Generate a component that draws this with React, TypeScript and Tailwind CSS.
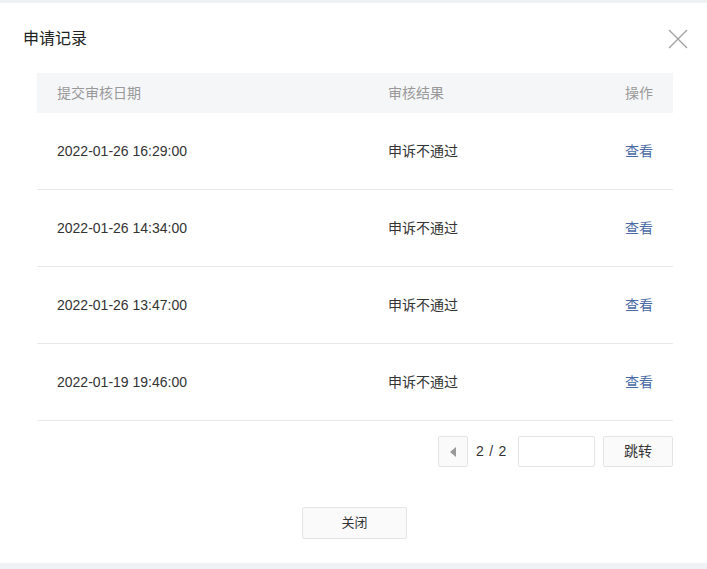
const rows = [
  { date: "2022-01-26 16:29:00", result: "申诉不通过" },
  { date: "2022-01-26 14:34:00", result: "申诉不通过" },
  { date: "2022-01-26 13:47:00", result: "申诉不通过" },
  { date: "2022-01-19 19:46:00", result: "申诉不通过" },
];

export default function App() {
  return (
    <div
      className="h-[569px] w-[707px] bg-[#f0f1f4] pt-[3px] pb-[6px] text-[14px] text-[#333]"
      style={{ fontFamily: '"Liberation Sans", "Noto Sans CJK SC", sans-serif' }}
    >
      <div className="flex h-full flex-col bg-white">
        <div className="flex items-center justify-between pl-[23px] pr-[18px] pt-[25px]">
          <h2 className="text-[16px] leading-[22px] text-[#222]">申请记录</h2>
          <svg width="20" height="20" viewBox="0 0 20 20" className="mr-[1px]">
            <path d="M1 1 L19 19 M19 1 L1 19" stroke="#a0a0a0" strokeWidth="1.3" />
          </svg>
        </div>

        <div className="ml-[37px] mr-[34px] mt-[23px]">
          <div className="grid h-[40px] grid-cols-[331px_1fr_auto] items-center bg-[#f5f6f8] px-[20px] text-[#999]">
            <span>提交审核日期</span>
            <span>审核结果</span>
            <span>操作</span>
          </div>
          {rows.map((r, i) => (
            <div
              key={i}
              className="grid h-[77px] grid-cols-[331px_1fr_auto] items-center border-b border-[#e8e9ec] px-[20px]"
            >
              <span>{r.date}</span>
              <span>{r.result}</span>
              <a className="cursor-pointer text-[#4a6aa5]">查看</a>
            </div>
          ))}
          <div className="mt-[15px] flex items-center justify-end">
            <button className="flex h-[31px] w-[30px] items-center justify-center rounded-[2px] border border-[#e3e4e8] bg-[#fafafa]">
              <svg width="6" height="10" viewBox="0 0 6 10">
                <path d="M6 0 L0 5 L6 10 Z" fill="#999" />
              </svg>
            </button>
            <span className="ml-[8px] mr-[11px] tracking-[0.75px] text-[#333]">2 / 2</span>
            <input className="h-[31px] w-[77px] rounded-[2px] border border-[#e3e4e8] outline-none" />
            <button className="ml-[8px] h-[31px] w-[70px] rounded-[2px] border border-[#e3e4e8] bg-[#fafafa] text-[#333]">
              跳转
            </button>
          </div>
        </div>

        <div className="mt-[40px] flex justify-center pl-[2px]">
          <button className="h-[32px] w-[105px] rounded-[2px] border border-[#e3e4e8] bg-[#fafafa] text-[13px] text-[#333]">
            关闭
          </button>
        </div>
      </div>
    </div>
  );
}
